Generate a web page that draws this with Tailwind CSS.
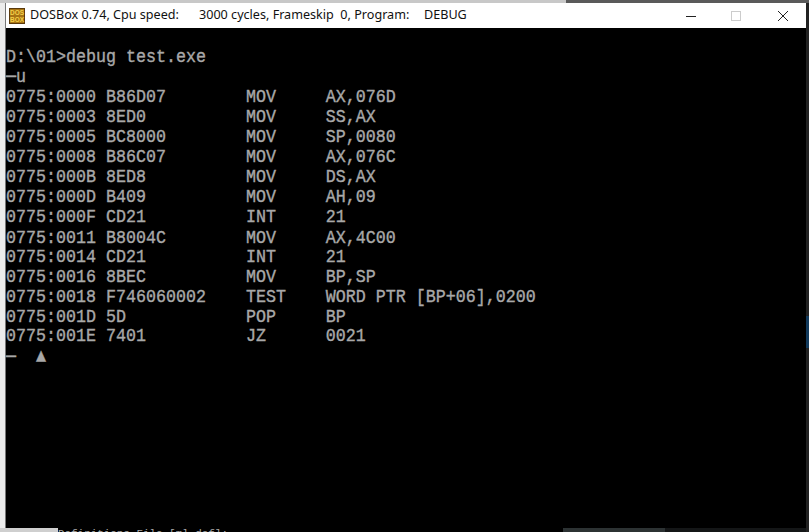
<!DOCTYPE html>
<html lang="en">
<head>
    <meta charset="UTF-8">
    <title>DOSBox</title>
    <script src="https://cdn.jsdelivr.net/npm/@tailwindcss/browser@4"></script>
</head>
<body class="bg-[#ececec] w-[809px] h-[532px] overflow-hidden relative">
    <!-- desktop behind the window -->
    <div class="absolute left-0 top-0 w-[809px] h-[3px] flex">
        <div class="w-[566px] bg-[#c8c8c8]"></div>
        <div class="flex-1 bg-[#5a5a5a]"></div>
    </div>
    <div class="absolute left-0 top-[528px] w-[58px] h-[4px] bg-[#cfcfcf]"></div>
    <div class="absolute left-[563px] top-[528px] w-[246px] h-[4px] bg-[#141617] flex">
        <div class="w-[102px] bg-[#2c3233]"></div>
    </div>
    <div class="absolute left-[58px] top-[528px] w-[505px] h-[4px] bg-black overflow-hidden">
        <div class="font-['Liberation_Mono',monospace] text-[10.9px] leading-[12px] text-[#aaa] whitespace-pre">Definitions File [ml def]:</div>
    </div>
    <div class="absolute left-[806px] top-[3px] w-[3px] h-[529px] bg-[#222]"></div>
    <div class="absolute left-[806px] top-[316px] w-[3px] h-[32px] bg-[#123a5c]"></div>

    <div class="absolute left-[5px] top-[3px] w-[801px] h-[525px] flex flex-col border-l border-[#777]">
        <header class="h-[25px] bg-white flex items-center pl-[3px] font-['Noto_Sans',sans-serif] text-[12.6px] text-[#111]">
            <svg width="16" height="16" viewBox="0 0 16 16" class="mr-[5px]">
                <rect width="16" height="16" fill="#5a3a0c"/>
                <rect x="1" y="1" width="14" height="14" fill="#a87414"/>
                <text x="8" y="7" text-anchor="middle" font-family="Liberation Sans" font-weight="700" font-size="6.5" fill="#f4d048">DOS</text>
                <text x="8" y="14" text-anchor="middle" font-family="Liberation Sans" font-weight="700" font-size="6.5" fill="#f4d048">BOX</text>
            </svg>
            <span class="w-[169px]">DOSBox 0.74, Cpu speed:</span>
            <span class="w-[225px]">3000 cycles, Frameskip&nbsp; 0, Program:</span>
            <span>DEBUG</span>
            <div class="ml-auto flex items-center">
                <svg width="12" height="12" viewBox="0 0 12 12" class="mr-[33px]"><path d="M1 6.5h10" stroke="#222" stroke-width="1"/></svg>
                <svg width="12" height="12" viewBox="0 0 12 12" class="mr-[35px]"><rect x="1.5" y="1.5" width="9" height="9" fill="none" stroke="#ccc"/></svg>
                <svg width="12" height="12" viewBox="0 0 12 12" class="mr-[17px]"><path d="M1 1l10 10M11 1L1 11" stroke="#222" stroke-width="1"/></svg>
            </div>
        </header>
        <main class="flex-1 bg-black pt-[19px]">
            <pre class="font-['Liberation_Mono','DejaVu_Sans_Mono',monospace] text-[16.67px] leading-[17.39px] scale-y-[1.15] origin-top [-webkit-text-stroke:0.35px_#a8a8a8] text-[#a8a8a8]">D:\01&gt;debug test.exe
─u
0775:0000 B86D07        MOV     AX,076D
0775:0003 8ED0          MOV     SS,AX
0775:0005 BC8000        MOV     SP,0080
0775:0008 B86C07        MOV     AX,076C
0775:000B 8ED8          MOV     DS,AX
0775:000D B409          MOV     AH,09
0775:000F CD21          INT     21
0775:0011 B8004C        MOV     AX,4C00
0775:0014 CD21          INT     21
0775:0016 8BEC          MOV     BP,SP
0775:0018 F746060002    TEST    WORD PTR [BP+06],0200
0775:001D 5D            POP     BP
0775:001E 7401          JZ      0021
─  ▲</pre>
        </main>
    </div>
</body>
</html>
